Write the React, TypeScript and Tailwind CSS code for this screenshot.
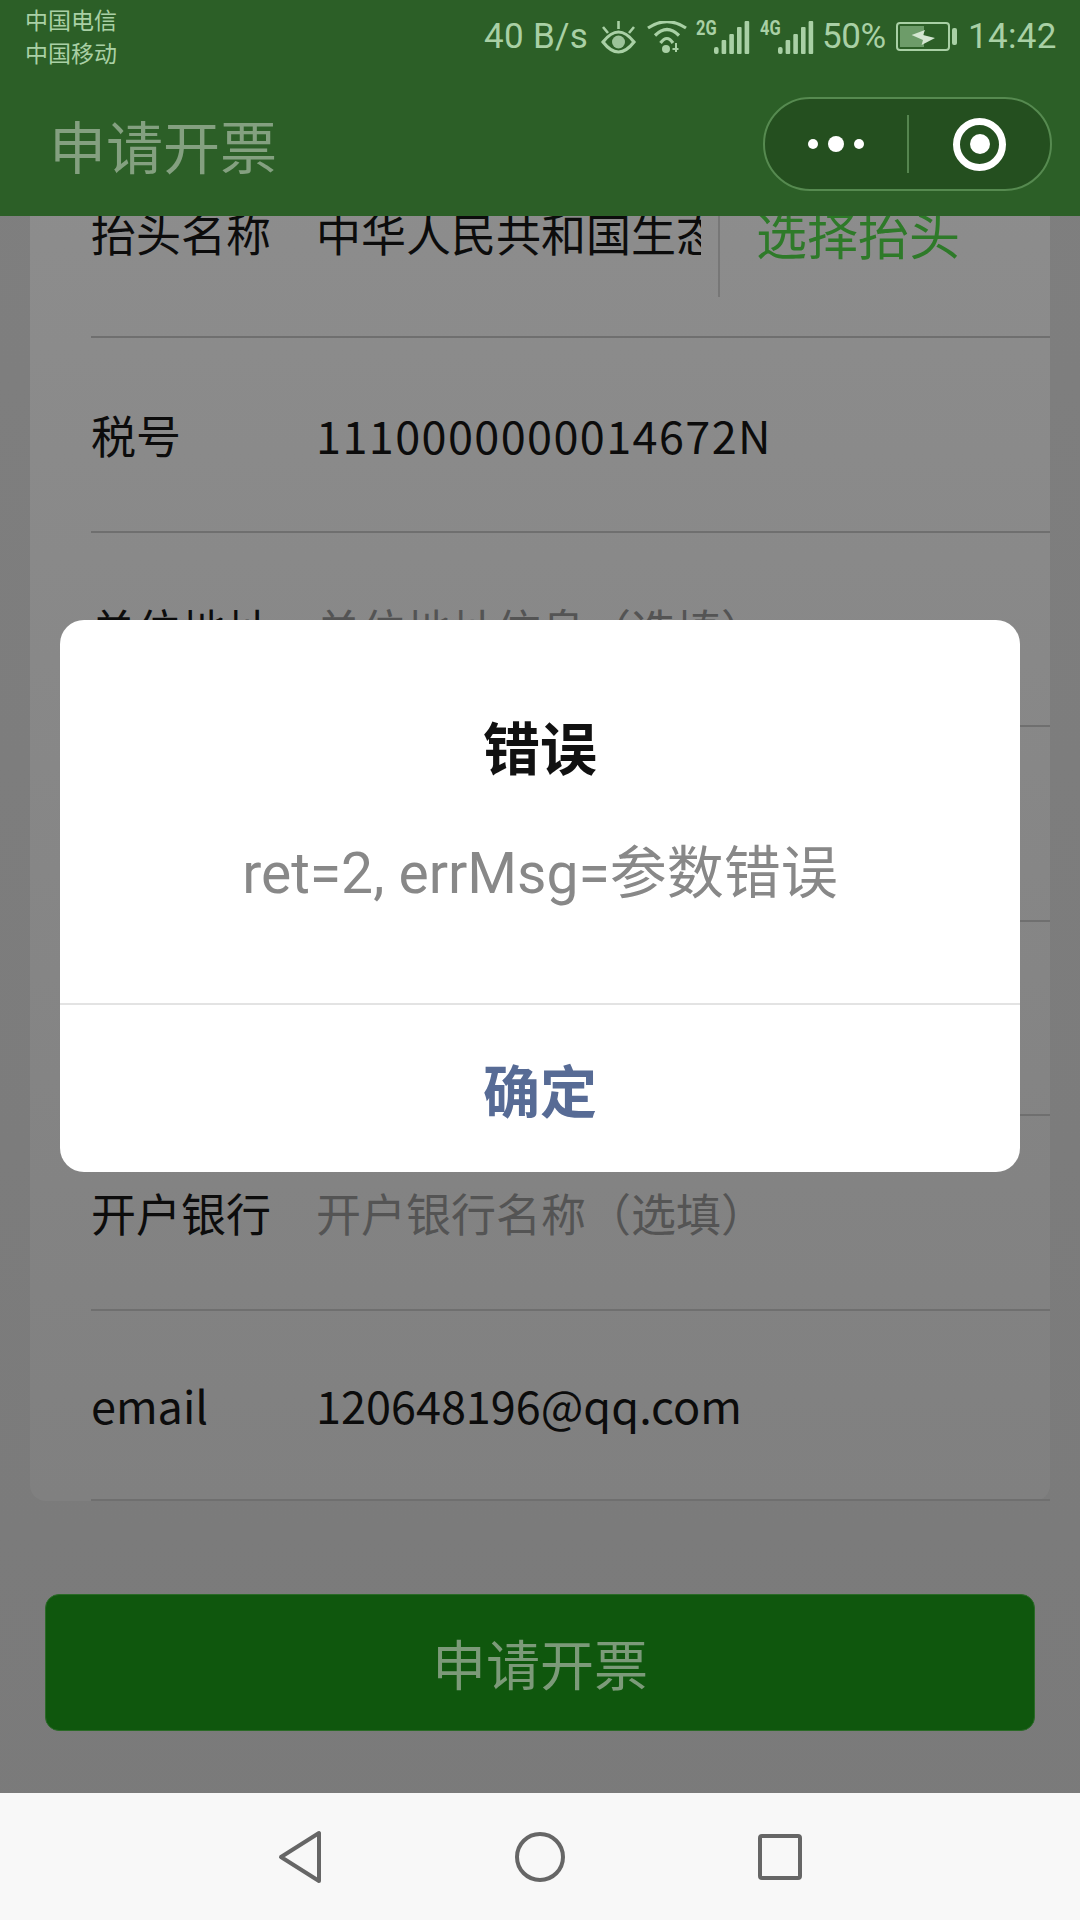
const rows = [
  { label: "税号", value: "1110000000014672N", className: "text-[#0c0c0c] tracking-[1.4px]" },
  { label: "单位地址", value: "单位地址信息（选填）", className: "text-[#545454]" },
  { label: "电话号码", value: "电话号码（选填）", className: "text-[#545454]" },
  { label: "银行账号", value: "银行账号（选填）", className: "text-[#545454]" },
  { label: "开户银行", value: "开户银行名称（选填）", className: "text-[#545454]" },
];

const Signal = ({ tag }: { tag: string }) => (
  <div className="relative h-[34px] w-[54px]">
    <span className="absolute left-0 top-[-2px] origin-left scale-x-[0.82] text-[20px] leading-[20px] font-bold text-[#a9d0a5]">
      {tag}
    </span>
    <svg width="54" height="34" viewBox="0 0 54 34" fill="#a9d0a5">
      <rect x="18" y="27" width="4.6" height="7" rx="2" />
      <rect x="25.6" y="20" width="4.6" height="14" rx="1" />
      <rect x="33.3" y="14" width="4.6" height="20" rx="1" />
      <rect x="41" y="7" width="4.6" height="27" rx="1" />
      <rect x="48.6" y="1" width="4.6" height="33" rx="1" />
    </svg>
  </div>
);

const StatusBar = () => (
  <div className="h-[75px] flex items-start justify-between pl-[25px] pr-[25px]">
    <div className="pt-[3px] text-[23px] leading-[33px] text-[#a9d0a5]">
      <div>中国电信</div>
      <div>中国移动</div>
    </div>
    <div className="flex items-center h-[74px] text-[35px] text-[#a9d0a5] [font-family:Roboto,sans-serif]">
      <span className="w-[117px] tracking-[0.3px]">40 B/s</span>
      <div className="w-[46px]">
        <svg width="36" height="33" viewBox="0 0 36 33" fill="none" stroke="#a9d0a5" strokeWidth="3.2">
          <path d="M2 21Q17.500 1 33 21Q17.500 41 2 21z" />
          <circle cx="17.500" cy="21" r="6.500" fill="#9cc399" stroke="none" />
          <path d="M17.500 0v8M2 6l5 6M33 6l-5 6" strokeWidth="2.600" />
        </svg>
      </div>
      <div className="w-[49px]">
        <svg width="42" height="33" viewBox="0 0 42 33" fill="none" stroke="#a9d0a5" strokeWidth="3.2">
          <path d="M1 7Q20-5.600 39 7M8 14.500Q20 2.500 32 14.500M13.500 22Q20 13 26 22" />
          <circle cx="19" cy="28" r="4" fill="#a9d0a5" stroke="none" />
          <path d="M29 22v9M25.500 28h6" strokeWidth="2" />
        </svg>
      </div>
      <div className="w-[64px]">
        <Signal tag="2G" />
      </div>
      <div className="w-[62px]">
        <Signal tag="4G" />
      </div>
      <span className="w-[74px] tracking-[-0.4px]">50%</span>
      <div className="w-[72px]">
        <svg width="62" height="30" viewBox="0 0 62 30" fill="none">
          <rect x="1" y="1" width="52" height="27" rx="3" stroke="#a9d0a5" strokeWidth="2" />
          <rect x="4" y="4" width="24" height="21" fill="#6d9c69" />
          <path d="M15.600 13L29 8l-2 5 12 3-13.400 7 1.400-5z" fill="#d4e6d1" />
          <rect x="56" y="6" width="5" height="17" rx="2" fill="#a9d0a5" />
        </svg>
      </div>
      <span className="w-[87px] tracking-[0.3px]">14:42</span>
    </div>
  </div>
);

const Capsule = () => (
  <div className="flex items-center w-[289px] h-[94px] rounded-full bg-[#244f1f] border-2 border-[#568a50]">
    <div className="w-[142px] flex items-center justify-center gap-[10px]">
      <span className="w-[10px] h-[10px] rounded-full bg-white" />
      <span className="w-[16px] h-[16px] rounded-full bg-white" />
      <span className="w-[10px] h-[10px] rounded-full bg-white" />
    </div>
    <div className="w-[2px] h-[58px] bg-[#55854f]" />
    <div className="flex-1 flex items-center justify-center">
      <div className="w-[53px] h-[53px] rounded-full border-[7px] border-white flex items-center justify-center">
        <span className="w-[20px] h-[20px] rounded-full bg-white" />
      </div>
    </div>
  </div>
);

export default function App() {
  return (
    <div
      className="relative w-[1080px] h-[1920px] overflow-hidden flex flex-col bg-gradient-to-b from-[#7f7f7f] to-[#7a7a7a]"
      style={{ fontFamily: '"Noto Sans CJK SC", "Noto Sans", sans-serif' }}
    >
      <header className="relative z-10 h-[216px] shrink-0 bg-[#2c5f27]">
        <StatusBar />
        <div className="flex items-center justify-between pl-[49px] pr-[28px] h-[116px] mt-[11px]">
          <span className="text-[57px] leading-none text-[#84a080] mt-[1px]">申请开票</span>
          <Capsule />
        </div>
      </header>

      <main className="flex-1 min-h-0 overflow-hidden">
        <div className="mx-[30px] -mt-[73px] rounded-[16px] bg-gradient-to-b from-[#8d8d8d] to-[#808080] pl-[61px] text-[45px] text-[#0c0c0c]">
          <div className="flex items-center h-[195px] border-b-2 border-[#6f6f6f]">
            <span className="w-[225px] shrink-0 -mt-[14px]">抬头名称</span>
            <span className="w-[385px] shrink-0 overflow-hidden whitespace-nowrap -mt-[14px]">中华人民共和国生态环境部</span>
            <div className="self-start h-[154px] ml-[17px] pl-[36px] pt-[26px] border-l-2 border-[#777777] flex items-center">
              <span className="text-[51px] leading-[68px] text-[#2e7a29]">选择抬头</span>
            </div>
          </div>
          {rows.map((row) => (
            <div key={row.label} className="flex items-center h-[194.6px] border-b-2 border-[#6f6f6f]">
              <span className="w-[225px] shrink-0">{row.label}</span>
              <span className={row.className}>{row.value}</span>
            </div>
          ))}
          <div className="flex items-center h-[190px] border-b-2 border-[#6f6f6f]">
            <span className="w-[225px] shrink-0">email</span>
            <span>120648196@qq.com</span>
          </div>
        </div>

        <div className="mx-[45px] mt-[93px] h-[137px] rounded-[14px] bg-[#0f570d] border border-[#2a6a27] flex items-center justify-center text-[54px] text-[#7c9a79]">
          申请开票
        </div>
      </main>

      <nav className="h-[127px] shrink-0 bg-[#f8f8f8] flex items-center justify-center gap-[193px]">
        <svg width="44" height="54" viewBox="0 0 44 54" fill="none" stroke="#666666" strokeWidth="4" strokeLinejoin="round">
          <path d="M41 3v48L3 27z" />
        </svg>
        <svg width="50" height="50" viewBox="0 0 50 50" fill="none" stroke="#666666" strokeWidth="4">
          <circle cx="25" cy="25" r="23" />
        </svg>
        <svg width="44" height="46" viewBox="0 0 44 46" fill="none" stroke="#666666" strokeWidth="4" strokeLinejoin="round">
          <rect x="2" y="2" width="40" height="42" rx="2" />
        </svg>
      </nav>

      <div className="absolute left-[60px] top-[620px] z-20 w-[960px] h-[552px] rounded-[24px] bg-white flex flex-col text-center">
        <div className="h-[385px] border-b-2 border-[#e3e3e3]">
          <div className="mt-[86px] text-[57px] leading-[78px] font-bold text-[#111111]">错误</div>
          <div className="mt-[51px] text-[57px] leading-[78px] text-[#888888] [font-family:Roboto,'Noto_Sans_CJK_SC',sans-serif]">
            ret=2, errMsg=参数错误
          </div>
        </div>
        <div className="flex-1 flex items-center justify-center text-[57px] font-bold text-[#576b95]">确定</div>
      </div>
    </div>
  );
}
